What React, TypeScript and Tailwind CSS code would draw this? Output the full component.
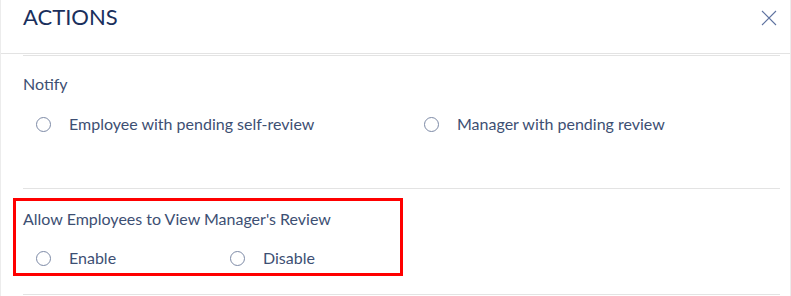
import React from 'react';

const Radio = ({ label }: { label: string }) => (
  <label className="flex items-center gap-[18px] cursor-pointer">
    <span className="w-[15px] h-[15px] rounded-full border border-[#7d8aa6] bg-white"></span>
    <span className="text-[16px] text-[#3d4f73]">{label}</span>
  </label>
);

const App = () => {
  return (
    <div className="w-[791px] h-[296px] bg-white overflow-hidden" style={{ fontFamily: 'Lato, "Open Sans", sans-serif' }}>
      <div className="h-full border-l border-r border-[#ececec]">
        {/* header */}
        <div className="flex items-start justify-between h-[54px] border-b border-[#e3e3e3] pl-[22px] pr-[13px]">
          <h2 className="text-[22px] leading-none text-[#1a2f5c] pt-[6px]">ACTIONS</h2>
          <button className="text-[#5f73a0] pt-[10px]">
            <svg width="16" height="16" viewBox="0 0 16 16" fill="none" stroke="currentColor" strokeWidth="1.1">
              <path d="M1 1 L15 15 M15 1 L1 15" />
            </svg>
          </button>
        </div>

        <div className="ml-[22px] mr-[10px] mt-[1px]">
          {/* notify */}
          <section className="border-t border-[#e3e3e3] h-[133px] pt-[16px]">
            <p className="text-[16px] text-[#3d4f73]">Notify</p>
            <div className="flex mt-[16px] pl-[13px]">
              <div className="w-[388px]">
                <Radio label="Employee with pending self-review" />
              </div>
              <Radio label="Manager with pending review" />
            </div>
          </section>

          {/* allow employees */}
          <section className="border-t border-[#e3e3e3] h-[106px] pt-[9px]">
            <div className="-ml-[10px] w-[390px] h-[78px] border-[3px] border-[#ff0000] pl-[7px] pt-[6px]">
              <p className="text-[16px] text-[#3d4f73]">Allow Employees to View Manager's Review</p>
              <div className="flex mt-[15px] pl-[13px]">
                <div className="w-[194px]">
                  <Radio label="Enable" />
                </div>
                <Radio label="Disable" />
              </div>
            </div>
          </section>
          <div className="border-t border-[#e3e3e3]"></div>
        </div>
      </div>
    </div>
  );
};

export default App;
